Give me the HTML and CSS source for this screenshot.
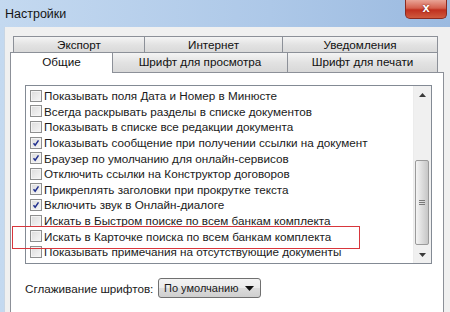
FILE: index.html
```html
<!DOCTYPE html>
<html lang="ru">
<head>
    <meta charset="UTF-8">
    <title>Настройки</title>
    <link rel="stylesheet" href="styles.css">
</head>
<body>
    <div class="window">
        <div class="titlebar">
            <span class="title">Настройки</span>
            <div class="close">x</div>
        </div>

        <div class="client">
            <div class="tabs">
                <div class="tab-row back">
                    <div class="tab w1">Экспорт</div>
                    <div class="tab w2">Интернет</div>
                    <div class="tab w3">Уведомления</div>
                </div>
                <div class="tab-row front">
                    <div class="tab w4 active">Общие</div>
                    <div class="tab w5">Шрифт для просмотра</div>
                    <div class="tab w6">Шрифт для печати</div>
                </div>

                <div class="panel">
                    <div class="listbox">
                        <div class="items">
                            <div class="item"><span class="box"></span>Показывать поля Дата и Номер в Минюсте</div>
                            <div class="item"><span class="box"></span>Всегда раскрывать разделы в списке документов</div>
                            <div class="item"><span class="box"></span>Показывать в списке все редакции документа</div>
                            <div class="item"><span class="box checked"><svg viewBox="0 0 12 12"><path d="M3 6.2 L5 8.6 L9 2.8" /></svg></span>Показывать сообщение при получении ссылки на документ</div>
                            <div class="item"><span class="box checked"><svg viewBox="0 0 12 12"><path d="M3 6.2 L5 8.6 L9 2.8" /></svg></span>Браузер по умолчанию для онлайн-сервисов</div>
                            <div class="item"><span class="box"></span>Отключить ссылки на Конструктор договоров</div>
                            <div class="item"><span class="box checked"><svg viewBox="0 0 12 12"><path d="M3 6.2 L5 8.6 L9 2.8" /></svg></span>Прикреплять заголовки при прокрутке текста</div>
                            <div class="item"><span class="box checked"><svg viewBox="0 0 12 12"><path d="M3 6.2 L5 8.6 L9 2.8" /></svg></span>Включить звук в Онлайн-диалоге</div>
                            <div class="item"><span class="box"></span>Искать в Быстром поиске по всем банкам комплекта</div>
                            <div class="item"><span class="box"></span>Искать в Карточке поиска по всем банкам комплекта</div>
                            <div class="item"><span class="box"></span>Показывать примечания на отсутствующие документы</div>
                        </div>
                        <div class="scrollbar">
                            <div class="arrow"><svg viewBox="0 0 7 4"><path d="M0 4 L3.5 0 L7 4 Z" /></svg></div>
                            <div class="track">
                                <div class="thumb"><span class="grip"></span></div>
                            </div>
                            <div class="arrow"><svg viewBox="0 0 7 4"><path d="M0 0 L3.5 4 L7 0 Z" /></svg></div>
                        </div>
                    </div>

                    <div class="smoothing">
                        <span class="label">Сглаживание шрифтов:</span>
                        <div class="combo">
                            <span>По умолчанию</span>
                            <svg viewBox="0 0 9 5"><path d="M0 0 L4.5 5 L9 0 Z" /></svg>
                        </div>
                    </div>
                </div>
            </div>
        </div>

        <div class="marker"></div>
    </div>
</body>
</html>
```

FILE: styles.css
```css
body {
    margin: 0;
    font-family: 'Liberation Sans', Arial, sans-serif;
    font-size: 11.7px;
    color: #1a1a1a;
}
.window {
    position: relative;
    width: 450px;
    height: 312px;
    overflow: hidden;
    display: flex;
    flex-direction: column;
    background: linear-gradient(90deg, #c4d9f0 0%, #adc8e8 60%, #9bbae0 100%);
}
.titlebar {
    height: 27px;
    display: flex;
    justify-content: space-between;
    align-items: flex-start;
    flex-shrink: 0;
}
.title {
    margin: 7px 0 0 5px;
    font-size: 12.5px;
    color: #151515;
}
.close {
    width: 40px;
    height: 18px;
    margin-right: 3px;
    border: 1px solid #8a2a20;
    border-top: none;
    border-radius: 0 0 5px 5px;
    background: linear-gradient(#e9a496 0%, #d4604e 45%, #c0301f 55%, #cf5a3e 100%);
    color: #fff;
    font-weight: bold;
    font-size: 13px;
    text-align: center;
    line-height: 16px;
    text-shadow: 0 0 2px #6a120a;
}
.client {
    flex: 1;
    margin-left: 4px;
    padding: 9px 0 0 5px;
    background: #f0f0f0;
    border-left: 1px solid #c9d6e4;
}
.tabs {
    width: 434px;
}
.tab-row {
    display: flex;
}
.tab {
    box-sizing: border-box;
    border: 1px solid #8c9098;
    border-bottom: none;
    background: linear-gradient(#f4f4f4, #e2e2e2 50%, #d8d8d8);
    text-align: center;
    color: #111;
}
.back {
    margin-left: 3px;
}
.back .tab {
    height: 17px;
    line-height: 15px;
}
.front {
    margin-top: -1px;
}
.front .tab {
    height: 20px;
    line-height: 18px;
}
.tab + .tab {
    margin-left: -1px;
}
.w1 { width: 132px; }
.w2 { width: 139px; }
.w3 { width: 156px; }
.w4 { width: 103px; }
.w5 { width: 176px; }
.w6 { width: 151px; }
.tab.active {
    background: #fff;
    position: relative;
    z-index: 1;
    height: 21px;
    margin-bottom: -1px;
}
.panel {
    box-sizing: border-box;
    height: 260px;
    border: 1px solid #8c9098;
    background: #fff;
    padding: 12px 0 0 14px;
}
.listbox {
    box-sizing: border-box;
    width: 407px;
    height: 179px;
    border: 1px solid #838a94;
    display: flex;
    background: #fff;
}
.items {
    flex: 1;
    padding-top: 2px;
}
.item {
    height: 15.6px;
    display: flex;
    align-items: center;
    padding-left: 4px;
    white-space: nowrap;
}
.box {
    box-sizing: border-box;
    width: 12px;
    height: 12px;
    margin-right: 2px;
    border: 1px solid #8e8f8f;
    background: linear-gradient(135deg, #dcdcdc, #f6f6f6);
    box-shadow: inset 0 0 0 1px #f4f4f4;
    flex-shrink: 0;
    display: flex;
}
.box svg {
    width: 10px;
    height: 10px;
}
.box path {
    fill: none;
    stroke: #21308f;
    stroke-width: 1.8;
}
.scrollbar {
    width: 17px;
    display: flex;
    flex-direction: column;
    background: #f0f0f0;
    border-left: 1px solid #ececec;
}
.arrow {
    height: 17px;
    display: flex;
    align-items: center;
    justify-content: center;
}
.arrow svg {
    width: 7px;
    height: 4px;
}
.arrow path {
    fill: #3a3a3a;
}
.track {
    flex: 1;
    display: flex;
    flex-direction: column;
    justify-content: flex-end;
    padding-bottom: 1px;
}
.thumb {
    box-sizing: border-box;
    height: 85px;
    margin: 0 2px 0 1px;
    border: 1px solid #9a9a9a;
    border-radius: 2px;
    background: linear-gradient(90deg, #f4f4f4, #d8d8d8 60%, #c6c6c6);
    display: flex;
    align-items: center;
    justify-content: center;
}
.grip {
    width: 6px;
    height: 6px;
    background: repeating-linear-gradient(#7a7a7a 0 1px, transparent 1px 2px);
}
.smoothing {
    display: flex;
    align-items: center;
    margin-top: 14px;
}
.label {
    width: 133px;
    flex-shrink: 0;
    white-space: nowrap;
}
.combo {
    box-sizing: border-box;
    width: 103px;
    height: 20px;
    border: 1px solid #707070;
    border-radius: 3px;
    background: linear-gradient(#f3f3f3, #ebebeb 50%, #dcdcdc 51%, #cfcfcf);
    display: flex;
    align-items: center;
    justify-content: space-between;
    padding: 0 6px 0 5px;
    white-space: nowrap;
    font-size: 11px;
}
.combo svg {
    width: 9px;
    height: 5px;
}
.combo path {
    fill: #111;
}
.marker {
    position: absolute;
    left: 12px;
    top: 226px;
    width: 348px;
    height: 23px;
    border: 1px solid #d8363c;
    box-sizing: border-box;
}
```
